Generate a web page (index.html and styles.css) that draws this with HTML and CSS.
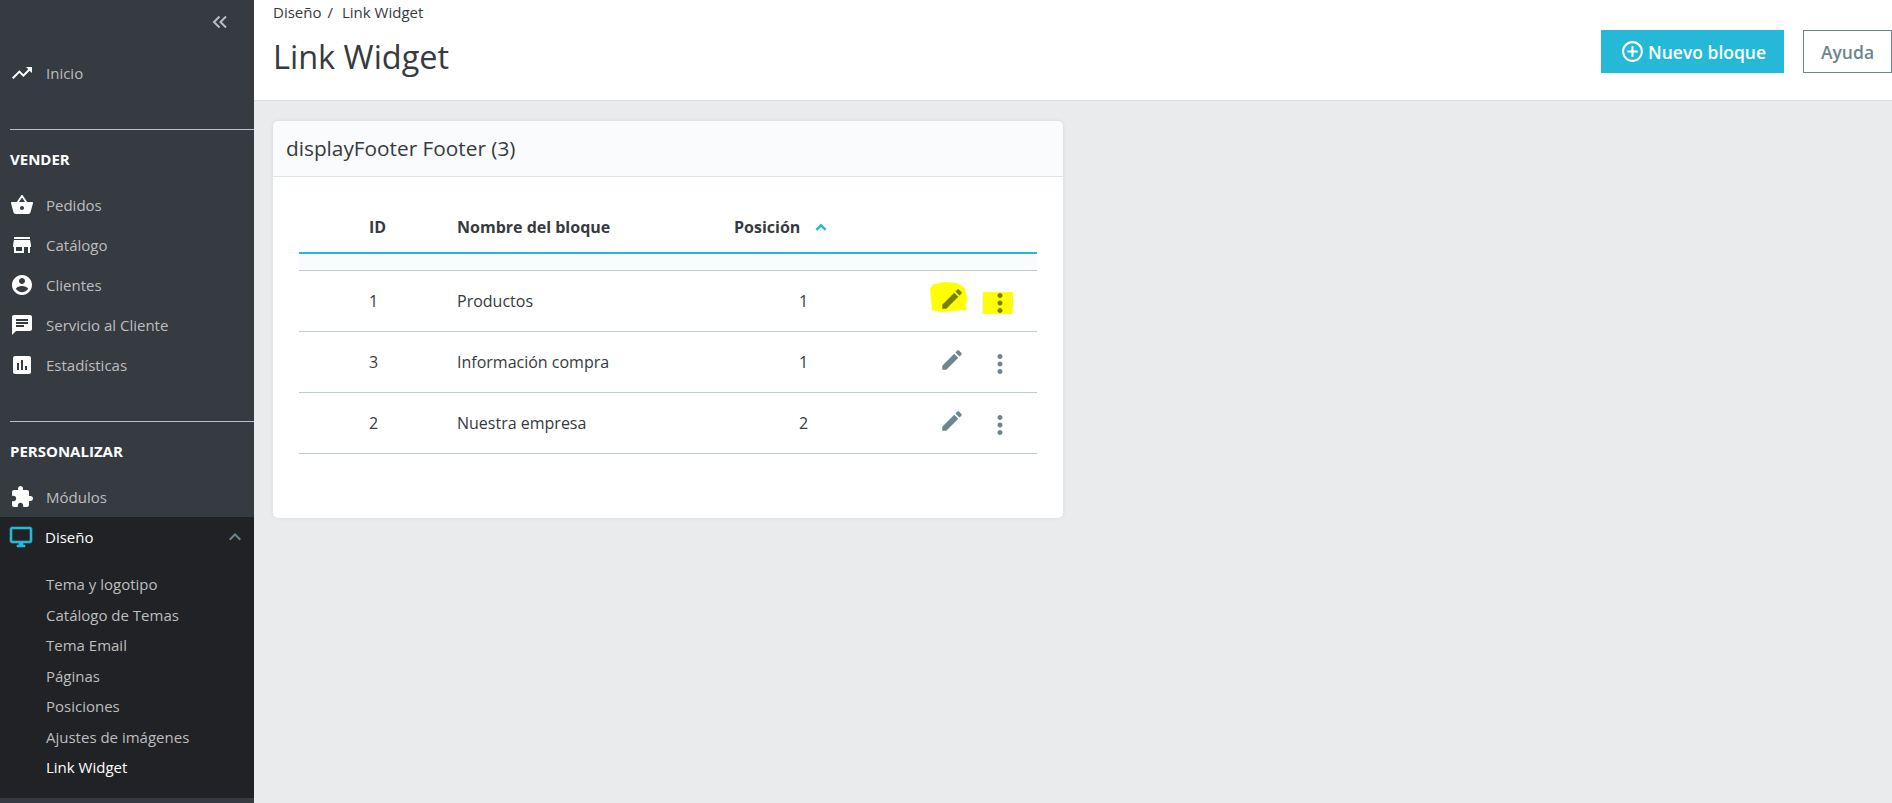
FILE: index.html
```html
<!DOCTYPE html>
<html lang="es">
<head>
<meta charset="utf-8">
<title>Link Widget</title>
<link rel="stylesheet" href="styles.css">
</head>
<body>
<div class="app">
  <nav class="sidebar">
    <div class="collapse-row">
      <svg class="collapse-icon" viewBox="0 0 16 14"><path d="M7.5 1.5 2 7l5.500 5.500M14 1.500 8.500 7l5.500 5.500"/></svg>
    </div>
    <a class="nav-item home"><svg class="nav-icon" viewBox="0 0 24 24"><path d="M16 6l2.290 2.290-4.880 4.880-4-4L2 16.590 3.410 18l6-6 4 4 6.300-6.290L22 12V6z"/></svg><span>Inicio</span></a>
    <hr class="nav-rule rule-first">
    <div class="nav-heading">VENDER</div>
    <a class="nav-item"><svg class="nav-icon" viewBox="0 0 24 24"><path d="M17.210 9l-4.380-6.560c-.19-.28-.51-.42-.83-.42-.32 0-.64.14-.83.43L6.790 9H2c-.55 0-1 .45-1 1 0 .09.01.18.04.27l2.540 9.270c.23.84 1 1.460 1.920 1.460h13c.92 0 1.690-.62 1.930-1.460l2.540-9.270L23 10c0-.55-.45-1-1-1h-4.790zM9 9l3-4.400L15 9H9zm3 8c-1.100 0-2-.9-2-2s.9-2 2-2 2 .9 2 2-.9 2-2 2z"/></svg><span>Pedidos</span></a>
    <a class="nav-item"><svg class="nav-icon" viewBox="0 0 24 24"><path d="M20 4H4v2h16V4zm1 10v-2l-1-5H4l-1 5v2h1v6h10v-6h4v6h2v-6h1zm-9 4H6v-4h6v4z"/></svg><span>Catálogo</span></a>
    <a class="nav-item"><svg class="nav-icon" viewBox="0 0 24 24"><path d="M12 2C6.480 2 2 6.480 2 12s4.480 10 10 10 10-4.480 10-10S17.520 2 12 2zm0 3c1.660 0 3 1.340 3 3s-1.340 3-3 3-3-1.340-3-3 1.340-3 3-3zm0 14.200c-2.500 0-4.710-1.280-6-3.220.03-1.990 4-3.080 6-3.080 1.990 0 5.970 1.090 6 3.080-1.290 1.940-3.500 3.220-6 3.220z"/></svg><span>Clientes</span></a>
    <a class="nav-item"><svg class="nav-icon" viewBox="0 0 24 24"><path d="M20 2H4c-1.100 0-1.990.9-1.990 2L2 22l4-4h14c1.100 0 2-.9 2-2V4c0-1.100-.9-2-2-2zM6 9h12v2H6V9zm8 5H6v-2h8v2zm4-6H6V6h12v2z"/></svg><span>Servicio al Cliente</span></a>
    <a class="nav-item"><svg class="nav-icon" viewBox="0 0 24 24"><path d="M19 3H5c-1.100 0-2 .9-2 2v14c0 1.100.9 2 2 2h14c1.100 0 2-.9 2-2V5c0-1.100-.9-2-2-2zM9 17H7v-7h2v7zm4 0h-2V7h2v10zm4 0h-2v-4h2v4z"/></svg><span>Estadísticas</span></a>
    <hr class="nav-rule rule-second">
    <div class="nav-heading">PERSONALIZAR</div>
    <a class="nav-item"><svg class="nav-icon" viewBox="0 0 24 24"><path d="M20.500 11H19V7c0-1.100-.9-2-2-2h-4V3.500C13 2.120 11.880 1 10.500 1S8 2.120 8 3.500V5H4c-1.100 0-1.990.9-1.990 2v3.800H3.500c1.490 0 2.700 1.210 2.700 2.700s-1.210 2.700-2.700 2.700H2V20c0 1.100.9 2 2 2h3.800v-1.500c0-1.490 1.210-2.700 2.700-2.700 1.490 0 2.700 1.210 2.700 2.700V22H17c1.100 0 2-.9 2-2v-4h1.500c1.380 0 2.500-1.120 2.500-2.500S21.880 11 20.500 11z"/></svg><span>Módulos</span></a>
    <div class="nav-open">
      <a class="nav-item active"><svg class="nav-icon accent" viewBox="0 0 24 24"><path d="M21 2H3c-1.100 0-2 .9-2 2v12c0 1.100.9 2 2 2h7v2H8v2h8v-2h-2v-2h7c1.100 0 2-.9 2-2V4c0-1.100-.9-2-2-2zm0 14H3V4h18v12z"/></svg><span>Diseño</span><svg class="nav-chevron" viewBox="0 0 24 24"><path d="M12 8l-6 6 1.410 1.410L12 10.830l4.590 4.580L18 14z"/></svg></a>
      <ul class="subnav">
        <li>Tema y logotipo</li>
        <li>Catálogo de Temas</li>
        <li>Tema Email</li>
        <li>Páginas</li>
        <li>Posiciones</li>
        <li>Ajustes de imágenes</li>
        <li class="current">Link Widget</li>
      </ul>
    </div>
  </nav>
  <div class="main">
    <header class="topbar">
      <div class="titles">
        <div class="crumbs"><span>Diseño</span><span class="crumb-sep">/</span><span>Link Widget</span></div>
        <h1>Link Widget</h1>
      </div>
      <div class="actions">
        <a class="btn btn-primary"><svg class="btn-icon" viewBox="0 0 24 24"><path d="M13 7h-2v4H7v2h4v4h2v-4h4v-2h-4V7zm-1-5C6.480 2 2 6.480 2 12s4.480 10 10 10 10-4.480 10-10S17.520 2 12 2zm0 18c-4.410 0-8-3.590-8-8s3.590-8 8-8 8 3.590 8 8-3.590 8-8 8z"/></svg>Nuevo bloque</a>
        <a class="btn btn-outline">Ayuda</a>
      </div>
    </header>
    <section class="content">
      <div class="card">
        <div class="card-head">displayFooter Footer (3)</div>
        <div class="card-body">
          <table class="grid">
            <colgroup><col class="c-drag"><col class="c-id"><col class="c-name"><col class="c-pos"><col></colgroup>
            <thead>
              <tr>
                <th></th><th>ID</th><th>Nombre del bloque</th>
                <th><span class="sort">Posición<svg class="sort-icon" viewBox="0 0 12 8"><path d="M6 .5.5 6l1.700 1.700L6 3.900l3.800 3.800L11.500 6z"/></svg></span></th>
                <th></th>
              </tr>
              <tr class="filter"><td colspan="5"></td></tr>
            </thead>
            <tbody>
              <tr>
                <td></td><td>1</td><td>Productos</td><td class="num">1</td>
                <td><div class="row-actions marked">
                  <span class="act act-edit"><svg class="mark mark-edit" viewBox="0 0 38 30"><path d="M1 6 5 2 16 0l12 1 8 5 2 10-1 12-13 1-12 1-9-2z"/></svg><svg class="ico" viewBox="0 0 24 24"><path d="M3 17.250V21h3.750L17.810 9.940l-3.750-3.750L3 17.250zM20.710 7.040c.39-.39.39-1.020 0-1.410l-2.340-2.340c-.39-.39-1.020-.39-1.410 0l-1.830 1.830 3.750 3.750 1.830-1.830z"/></svg></span>
                  <span class="act act-more"><svg class="mark mark-more" viewBox="0 0 30 22"><path d="M0 0h30v16l-1 6H0z"/></svg><svg class="ico" viewBox="0 0 24 24"><path d="M12 8c1.100 0 2-.9 2-2s-.9-2-2-2-2 .9-2 2 .9 2 2 2zm0 2c-1.100 0-2 .9-2 2s.9 2 2 2 2-.9 2-2-.9-2-2-2zm0 6c-1.100 0-2 .9-2 2s.9 2 2 2 2-.9 2-2-.9-2-2-2z"/></svg></span>
                </div></td>
              </tr>
              <tr>
                <td></td><td>3</td><td>Información compra</td><td class="num">1</td>
                <td><div class="row-actions">
                  <span class="act act-edit"><svg class="ico" viewBox="0 0 24 24"><path d="M3 17.250V21h3.750L17.810 9.940l-3.750-3.750L3 17.250zM20.710 7.040c.39-.39.39-1.020 0-1.410l-2.340-2.340c-.39-.39-1.020-.39-1.410 0l-1.830 1.830 3.750 3.750 1.830-1.830z"/></svg></span>
                  <span class="act act-more"><svg class="ico" viewBox="0 0 24 24"><path d="M12 8c1.100 0 2-.9 2-2s-.9-2-2-2-2 .9-2 2 .9 2 2 2zm0 2c-1.100 0-2 .9-2 2s.9 2 2 2 2-.9 2-2-.9-2-2-2zm0 6c-1.100 0-2 .9-2 2s.9 2 2 2 2-.9 2-2-.9-2-2-2z"/></svg></span>
                </div></td>
              </tr>
              <tr>
                <td></td><td>2</td><td>Nuestra empresa</td><td class="num">2</td>
                <td><div class="row-actions">
                  <span class="act act-edit"><svg class="ico" viewBox="0 0 24 24"><path d="M3 17.250V21h3.750L17.810 9.940l-3.750-3.750L3 17.250zM20.710 7.040c.39-.39.39-1.020 0-1.410l-2.340-2.340c-.39-.39-1.020-.39-1.410 0l-1.830 1.830 3.750 3.750 1.830-1.830z"/></svg></span>
                  <span class="act act-more"><svg class="ico" viewBox="0 0 24 24"><path d="M12 8c1.100 0 2-.9 2-2s-.9-2-2-2-2 .9-2 2 .9 2 2 2zm0 2c-1.100 0-2 .9-2 2s.9 2 2 2 2-.9 2-2-.9-2-2-2zm0 6c-1.100 0-2 .9-2 2s.9 2 2 2 2-.9 2-2-.9-2-2-2z"/></svg></span>
                </div></td>
              </tr>
            </tbody>
          </table>
        </div>
      </div>
    </section>
  </div>
</div>
</body>
</html>
```

FILE: styles.css
```css
* { box-sizing: border-box; }
html, body { height: 100%; }
body {
  margin: 0;
  overflow: hidden;
  font-family: "Open Sans", sans-serif;
  font-size: 14px;
  color: #363a41;
  background: #eaebec;
}
.app { display: flex; height: 803px; }

/* Sidebar */
.sidebar {
  width: 254px;
  flex: none;
  background: #363a41;
  color: #bebebe;
  font-size: 15px;
  overflow: hidden;
}
.collapse-row { height: 42px; padding: 15px 26px 0 0; display: flex; justify-content: flex-end; }
.collapse-icon { width: 16px; height: 14px; fill: none; stroke: #bebebe; stroke-width: 2; }
.nav-item { display: flex; align-items: center; height: 40px; padding-left: 10px; }
.nav-item span { margin-left: 12px; }
.home { margin-top: 11px; }
.nav-icon { width: 24px; height: 24px; flex: none; fill: #fff; }
.nav-rule { margin: 0 0 0 10px; border: 0; border-top: 1px solid #bebebe; }
.rule-first { margin-top: 36px; }
.rule-second { margin-top: 36px; }
.nav-heading {
  height: 20px;
  margin: 19px 0 16px 10px;
  font-weight: 700;
  line-height: 20px;
  color: #fff;
}
.nav-open { background: #202226; height: 281px; }
.active { color: #fff; padding-left: 9px; position: relative; }
.active span { margin-left: 12px; }
.accent { fill: #25b9d7; stroke: #25b9d7; stroke-width: .6; }
.nav-chevron { width: 24px; height: 24px; margin-left: auto; margin-right: 7px; fill: #6c868e; }
.subnav { list-style: none; margin: 12px 0 0; padding: 0 0 0 46px; }
.subnav li { height: 30.500px; line-height: 30.500px; }
.subnav .current { color: #fff; }

/* Main */
.main { flex: 1; min-width: 0; }
.topbar {
  height: 101px;
  padding: 0 0 0 19px;
  display: flex;
  justify-content: space-between;
  background: #fff;
  border-bottom: 1px solid #dfdfdf;
}
.crumbs { display: flex; height: 24px; line-height: 24px; font-size: 15px; margin-bottom: 11px; }
.crumb-sep { margin: 0 9px 0 6px; }
h1 { margin: 0; font-size: 32.500px; font-weight: 400; line-height: 44px; color: #363a41; }
.actions { display: flex; align-items: flex-start; gap: 19px; padding-top: 30px; }
.btn { display: flex; align-items: center; height: 43px; font-size: 17.500px; font-weight: 600; }
.btn-primary { width: 183px; padding-left: 19px; color: #fff; background: #25b9d7; }
.btn-icon { width: 25px; height: 25px; fill: #fff; margin-right: 3px; }
.btn-outline { width: 89px; justify-content: center; color: #6c868e; border: 1px solid #6c868e; background: #fff; }

/* Card */
.content { padding: 20px 0 0 19px; }
.card {
  width: 790px;
  height: 397px;
  background: #fff;
  border-radius: 5px;
  box-shadow: 0 0 4px rgba(0, 0, 0, .08);
  overflow: hidden;
}
.card-head {
  height: 56px;
  padding-left: 13px;
  font-size: 20.800px;
  line-height: 55px;
  color: #363a41;
  background: #fafbfc;
  border-bottom: 1px solid #dbe6e9;
}
.card-body { padding: 19px 26px 0; }

/* Table */
.grid { width: 738px; border-collapse: collapse; table-layout: fixed; font-size: 16px; }
.c-drag { width: 70px; }
.c-id { width: 88px; }
.c-name { width: 277px; }
.c-pos { width: 138px; }
.grid th { height: 57px; padding: 5px 0 0; text-align: left; font-weight: 700; border-bottom: 2px solid #25b9d7; }
.filter td { height: 17px; padding: 0; background: #fafbfc; border-bottom: 1px solid #bbcdd2; }
.grid tbody td { height: 61px; padding: 0; border-bottom: 1px solid #bbcdd2; }
.grid .num { padding-left: 65px; }
.sort { display: inline-flex; align-items: center; }
.sort-icon { width: 12px; height: 8px; margin-left: 15px; fill: #25b9d7; }
.row-actions { display: flex; align-items: center; padding-left: 67px; }
.act { position: relative; display: block; }
.act-edit { top: -2px; width: 26px; height: 26px; }
.act-more { top: 2px; width: 30px; height: 30px; margin-left: 20px; }
.ico { position: relative; display: block; width: 100%; height: 100%; fill: #6c868e; }
.mark { position: absolute; fill: #ff0; }
.mark-edit { left: -10px; top: -4px; width: 38px; height: 30px; }
.mark-more { left: -2px; top: 4px; width: 30px; height: 22px; }
.marked .ico { fill: #758000; }
```
